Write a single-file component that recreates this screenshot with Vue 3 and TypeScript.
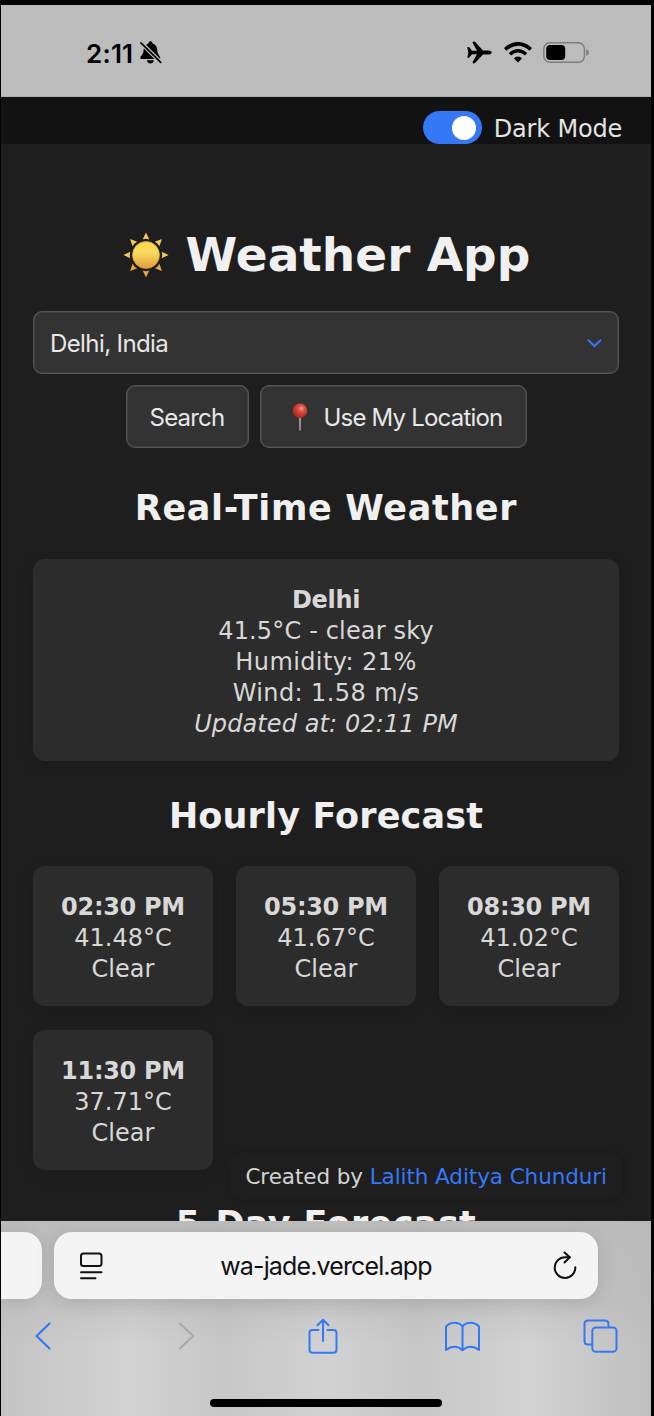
<script setup lang="ts">
interface Hour {
  time: string
  temp: string
  sky: string
}

const hours: Hour[] = [
  { time: '02:30 PM', temp: '41.48°C', sky: 'Clear' },
  { time: '05:30 PM', temp: '41.67°C', sky: 'Clear' },
  { time: '08:30 PM', temp: '41.02°C', sky: 'Clear' },
  { time: '11:30 PM', temp: '37.71°C', sky: 'Clear' },
]

const rays: number[] = [0, 45, 90, 135, 180, 225, 270, 315]
</script>

<template>
  <div class="device">
    <div class="screen">
      <div class="status">
        <div class="clock">
          <span class="time">2:11</span>
          <svg class="bell" width="22" height="23" viewBox="0 0 22 23">
            <path d="M5 4.800Q7 3 8.300 2.400Q8.800 .2 10.500 .2T12.700 2.400Q17.300 4.200 17.300 9.500Q17.300 12.800 19.200 14.700Q20.600 16.200 20.300 17.300Q20 18 19 18H2Q.2 18 .2 16.700Q.2 15.800 1.600 14.500Q3.600 12.500 3.700 8.500Q3.800 6.500 5 4.800Z" fill="#000" />
            <path d="M7 19.300H13.800Q13.200 22.500 10.400 22.500T7 19.300Z" fill="#000" />
            <path d="M-.5 .2L22 22.600" stroke="#bcbcbc" stroke-width="4.200" />
            <path d="M.9 1.800L20.700 21.400" stroke="#000" stroke-width="1.700" stroke-linecap="round" />
          </svg>
        </div>
        <div class="signals">
          <svg width="25" height="23" viewBox="0 0 25 23">
            <path d="M.3 6.300Q1.500 5.500 2.500 6.600L5 9.800H10L5.500 1.500Q5.600 .5 6.800 .5Q7.800 .5 8.500 1.300L16 9.400H21.500Q24.700 9.700 24.700 11.400T21.500 13.400H16L8.500 21.600Q7.500 22.600 6.300 22.400Q5.300 22 5.700 21L10 13.300H5L2.500 16.300Q1.500 17.300 .3 16.600L1.300 11.500Z" fill="#000" />
          </svg>
          <svg width="28" height="21" viewBox="0 0 28 21" fill="none" stroke="#000">
            <path d="M1.200 7.300Q14 -3.700 26.800 7.300" stroke-width="3.700" />
            <path d="M5.900 12.200Q14 5.200 22.100 12.200" stroke-width="3.500" />
            <path d="M9.900 16.200Q14 12.700 18.100 16.200L14 20.500Z" fill="#000" stroke="none" />
          </svg>
          <svg width="46" height="21" viewBox="0 0 46 21">
            <rect x=".8" y=".8" width="40.600" height="19.400" rx="6" fill="none" stroke="#7f7f7f" stroke-width="1.500" />
            <rect x="3.200" y="3" width="19" height="15" rx="4" fill="#000" />
            <path d="M43.200 7.200Q46 8 46 10.500T43.200 13.800Z" fill="#7f7f7f" />
          </svg>
        </div>
      </div>

      <div class="page">
        <header class="topbar">
          <span class="toggle"><span class="knob"></span></span>
          <span class="mode">Dark Mode</span>
        </header>

        <main class="app">
          <h1>
            <svg class="sun" width="46" height="46" viewBox="-23 -23 46 46">
              <defs>
                <linearGradient id="disc" x1="0" y1="0" x2="0" y2="1">
                  <stop offset="0" stop-color="#f7d44d" />
                  <stop offset=".4" stop-color="#f8dc5d" />
                  <stop offset="1" stop-color="#e39a3c" />
                </linearGradient>
              </defs>
              <circle r="13.500" fill="url(#disc)" stroke="#dba43c" stroke-width=".7" />
              <path v-for="r in rays" :key="r" d="M0 -22.600L3.300 -15.600Q0 -16.900 -3.300 -15.600Z" :fill="r > 90 && r < 270 ? '#e9a64b' : '#f3cb58'" :transform="`rotate(${r})`" />
            </svg>
            <span>Weather App</span>
          </h1>

          <div class="select">
            <span class="place">Delhi, India</span>
            <svg width="15" height="9" viewBox="0 0 15 9">
              <path d="M1.500 1.200L7.500 7L13.500 1.200" fill="none" stroke="#3478f6" stroke-width="2" stroke-linecap="round" />
            </svg>
          </div>

          <div class="buttons">
            <button class="search"><span>Search</span></button>
            <button class="locate">
              <svg width="16" height="28" viewBox="0 0 16 28">
                <defs>
                  <radialGradient id="pin" cx=".6" cy=".35" r=".65">
                    <stop offset="0" stop-color="#f0a59b" />
                    <stop offset=".35" stop-color="#dc4c42" />
                    <stop offset="1" stop-color="#b3261f" />
                  </radialGradient>
                </defs>
                <path d="M6.900 13H9.100L8.900 27.500H7.100Z" fill="#9a8f89" />
                <circle cx="8" cy="7.700" r="7.200" fill="url(#pin)" />
              </svg>
              <span>Use My Location</span>
            </button>
          </div>

          <h2 class="h-now">Real-Time Weather</h2>
          <section class="card now">
            <strong>Delhi</strong>
            <span class="n-temp">41.5°C - clear sky</span>
            <span class="n-hum">Humidity: 21%</span>
            <span class="n-wind">Wind: 1.58 m/s</span>
            <em>Updated at: 02:11 PM</em>
          </section>

          <h2 class="h-hour">Hourly Forecast</h2>
          <div class="grid">
            <section v-for="h in hours" :key="h.time" class="card hour">
              <strong>{{ h.time }}</strong>
              <span>{{ h.temp }}</span>
              <span>{{ h.sky }}</span>
            </section>
          </div>

          <h2 class="h-day">5-Day Forecast</h2>
        </main>

        <div class="credit">Created by <a>Lalith Aditya Chunduri</a></div>
      </div>

      <div class="browser">
        <div class="tabs">
          <div class="prev-tab"></div>
          <div class="address">
            <svg width="24" height="28" viewBox="0 0 24 28" fill="none" stroke="#111" stroke-width="2" stroke-linecap="round">
              <rect x="2" y="1.500" width="20.500" height="12.500" rx="2.500" />
              <path d="M2 20.200H22.500M2 26.300H16.500" />
            </svg>
            <span class="url">wa-jade.vercel.app</span>
            <svg class="reload" width="24" height="28" viewBox="0 0 24 28" fill="none" stroke="#111" stroke-width="2" stroke-linecap="round" stroke-linejoin="round">
              <path d="M16.800 6.300H12A10.300 10.300 0 1 0 22.300 16.300" />
              <path d="M11.500 1.500L16.800 6.300L11.500 11.500" />
            </svg>
          </div>
        </div>
        <nav class="tools">
          <svg class="back" width="18" height="28" viewBox="0 0 18 28"><path d="M15.500 1.500L2.500 14L15.500 26.500" fill="none" stroke="#3478f6" stroke-width="2.200" stroke-linecap="round" stroke-linejoin="round" /></svg>
          <svg class="forward" width="18" height="28" viewBox="0 0 18 28"><path d="M2.800 1.500L16 14L2.800 26.500" fill="none" stroke="#a9a9a9" stroke-width="2.200" stroke-linecap="round" stroke-linejoin="round" /></svg>
          <svg class="share" width="30" height="36" viewBox="0 0 30 36" fill="none" stroke="#3478f6" stroke-width="2" stroke-linecap="round" stroke-linejoin="round">
            <path d="M10.500 12H4.500Q1.500 12 1.500 15V31.500Q1.500 34.800 4.500 34.800H25.500Q28.500 34.800 28.500 31.500V15Q28.500 12 25.500 12H19.500" />
            <path d="M15 23V2M9.500 7.300L15 1.800L20.500 7.300" />
          </svg>
          <svg class="book" width="37" height="31" viewBox="0 0 37 31" fill="none" stroke="#3478f6" stroke-width="2" stroke-linecap="round" stroke-linejoin="round">
            <path d="M18.500 5.500Q15.500 1.800 10.500 1.800T2 5.500V29Q6 25.800 10.500 25.800T18.500 29.300Q22 25.800 26.500 25.800T35 29V5.500Q31.500 1.800 26.500 1.800T18.500 5.500V29.300" />
          </svg>
          <svg class="pages" width="35" height="34" viewBox="0 0 35 34" fill="none" stroke="#3478f6" stroke-width="2">
            <path d="M9 25.500H5Q1.500 25.500 1.500 22V5Q1.500 1.500 5 1.500H22Q25.500 1.500 25.500 5V8.500" />
            <rect x="9.300" y="8.500" width="24.200" height="24.200" rx="3.500" />
          </svg>
        </nav>
        <div class="home"></div>
      </div>
    </div>
  </div>
</template>

<style>
body {
  background: #030303;
}
</style>

<style scoped>
.device {
  box-sizing: border-box;
  width: 654px;
  height: 1416px;
  padding: 5px 3px 0 1px;
  background: #030303;
  overflow: hidden;
  font-family: Verdana, 'DejaVu Sans', sans-serif;
}
.screen {
  height: 1411px;
  display: flex;
  flex-direction: column;
  background: #1e1e1e;
}
.status {
  box-sizing: border-box;
  height: 92px;
  flex: none;
  display: flex;
  justify-content: space-between;
  align-items: center;
  padding: 4px 62px 0 85px;
  background: #bcbcbc;
  border-bottom: 1px solid #adadad;
}
.clock {
  display: flex;
  align-items: center;
  gap: 7px;
}
.time {
  font: 600 26px/30px Inter, sans-serif;
  letter-spacing: 0.2px;
  padding-top: 2px;
  color: #000;
}
.signals {
  display: flex;
  align-items: center;
  gap: 11.500px;
}
.page {
  position: relative;
  height: 1124px;
  flex: none;
  overflow: hidden;
  background: #1e1e1e;
}
.topbar {
  height: 47px;
  box-sizing: border-box;
  padding: 14px 29px 0 0;
  display: flex;
  justify-content: flex-end;
  gap: 12px;
  background: #121212;
}
.toggle {
  box-sizing: border-box;
  width: 59px;
  height: 33px;
  border-radius: 17px;
  padding: 5px 6px 4px 5px;
  display: flex;
  justify-content: flex-end;
  background: #3478f6;
}
.knob {
  width: 24px;
  height: 24px;
  border-radius: 50%;
  background: #fff;
}
.mode {
  font-size: 24px;
  letter-spacing: -0.2px;
  line-height: 37px;
  color: #e4e4e4;
}
.app {
  padding: 0 32px;
  display: flex;
  flex-direction: column;
}
h1 {
  margin: 80px 0 0;
  height: 62px;
  display: flex;
  align-items: center;
  justify-content: center;
  gap: 17px;
  padding-left: 1px;
  font-size: 47px;
  line-height: 62px;
  color: #f0f0f0;
  white-space: nowrap;
}
h2 {
  margin: 0;
  text-align: center;
  font-size: 35px;
  line-height: 44px;
  color: #f0f0f0;
  white-space: nowrap;
}
.select {
  box-sizing: border-box;
  margin-top: 25px;
  height: 63px;
  border: 1px solid #555;
  border-radius: 9px;
  background: #333;
  padding: 2px 16px 0;
  display: flex;
  align-items: center;
  justify-content: space-between;
  color: #e8e8e8;
  font: 24px/30px Inter, sans-serif;
  letter-spacing: -0.6px;
}
.buttons {
  margin-top: 11px;
  display: flex;
  justify-content: center;
  gap: 11px;
}
button {
  box-sizing: border-box;
  height: 63px;
  border: 1px solid #555;
  border-radius: 9px;
  background: #333;
  color: #e8e8e8;
  padding: 2px 0 0;
  display: flex;
  align-items: center;
  justify-content: center;
  font: 24px/30px Inter, sans-serif;
  letter-spacing: -0.8px;
  white-space: nowrap;
}
.select,
button {
  box-shadow: inset 0 0 0 0.5px #505050;
}
.search {
  width: 123px;
}
.locate {
  width: 267px;
  gap: 16px;
  padding-left: 8px;
}
.locate svg {
  margin-top: -2px;
}
.h-now {
  margin-top: 38px;
  letter-spacing: 0.65px;
}
.h-hour {
  margin-top: 32px;
  letter-spacing: 0.15px;
}
.h-day {
  margin-top: 32px;
  letter-spacing: 0.4px;
}
.card {
  border-radius: 12px;
  background: #2c2c2c;
  box-shadow: 0 4px 16px rgba(0, 0, 0, 0.13);
  display: flex;
  flex-direction: column;
  align-items: center;
  font-size: 24px;
  line-height: 31px;
  color: #d8d8d8;
  white-space: nowrap;
}
.now {
  box-sizing: border-box;
  margin-top: 29px;
  height: 202px;
  margin-bottom: 1px;
  padding-top: 26px;
}
.card strong {
  letter-spacing: -0.3px;
}
.n-temp {
  letter-spacing: 0.16px;
}
.n-hum,
.n-wind {
  letter-spacing: 0.4px;
}
.card em {
  letter-spacing: 0.1px;
}
.grid {
  margin-top: 28px;
  display: grid;
  grid-template-columns: repeat(3, 180px);
  justify-content: space-between;
  gap: 24px 0;
}
.hour {
  box-sizing: border-box;
  height: 140px;
  padding-top: 26px;
}
.credit {
  position: absolute;
  right: 29px;
  bottom: 22px;
  height: 46px;
  box-sizing: border-box;
  padding: 1px 15px 0;
  border-radius: 10px;
  background: #1e1e1e;
  box-shadow: 0 0 8px rgba(0, 0, 0, 0.16);
  font-size: 21.500px;
  letter-spacing: -0.08px;
  line-height: 46px;
  color: #d4d4d4;
  white-space: nowrap;
}
.credit a {
  color: #3478f6;
}
.browser {
  flex: 1;
  display: flex;
  flex-direction: column;
  overflow: hidden;
  background:
    linear-gradient(180deg, rgba(183, 183, 183, 0.7) 0, rgba(183, 183, 183, 0.45) 80px, rgba(190, 190, 190, 0) 125px),
    linear-gradient(90deg, #c4c4c4 0, #d3d3d3 20%, #c7c7c7 34%, #d2d2d2 50%, #c7c7c7 64%, #d3d3d3 81%, #bfbfbf 100%);
}
.tabs {
  display: flex;
  gap: 12px;
  margin-top: 11px;
}
.prev-tab {
  width: 41px;
  height: 67px;
  border-radius: 0 18px 18px 0;
  background: #f4f4f4;
  box-shadow: 0 2px 16px rgba(0, 0, 0, 0.1);
}
.address {
  box-sizing: border-box;
  width: 544px;
  height: 67px;
  border-radius: 18px;
  padding: 0 21px 0 25px;
  display: flex;
  align-items: center;
  justify-content: space-between;
  background: #f4f4f4;
  box-shadow: 0 3px 20px rgba(0, 0, 0, 0.13);
}
.url {
  margin-right: 4px;
  padding-top: 1px;
  font: 25px/30px Inter, sans-serif;
  letter-spacing: -0.87px;
  color: #111;
  white-space: nowrap;
}
.reload {
  margin-top: -1px;
}
.tools {
  height: 36px;
  margin: 19px 0 0 33px;
  display: flex;
  align-items: center;
}
.forward {
  margin-left: 125px;
}
.share {
  margin-left: 113px;
}
.book {
  margin-left: 106px;
}
.pages {
  margin-left: 102px;
}
.home {
  width: 232px;
  height: 8px;
  margin: 45px auto 0;
  border-radius: 4px;
  background: #000;
}
</style>
